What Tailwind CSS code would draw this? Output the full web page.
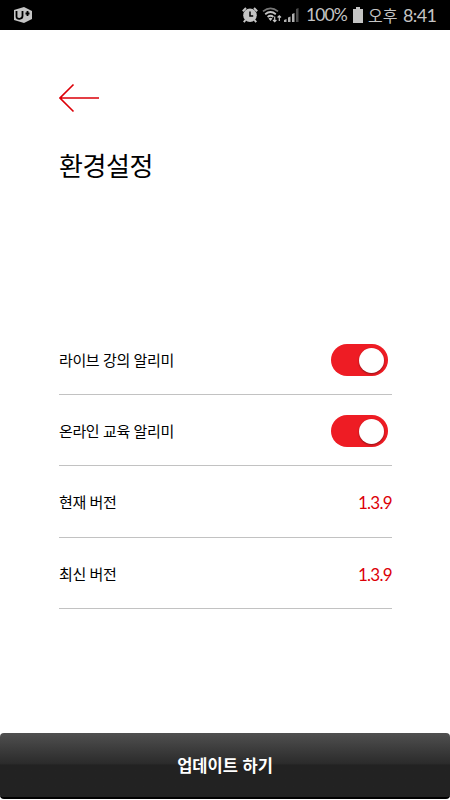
<!DOCTYPE html>
<html lang="ko">
<head>
  <meta charset="UTF-8" />
  <meta name="viewport" content="width=device-width, initial-scale=1.0" />
  <title>환경설정</title>
  <script src="https://cdn.jsdelivr.net/npm/@tailwindcss/browser@4"></script>
</head>
<body class="w-[450px] h-[800px] bg-white text-black overflow-hidden flex flex-col font-['Noto_Sans_CJK_KR',sans-serif]">

  <!-- Status bar -->
  <header class="h-[30px] shrink-0 bg-black text-[#c4c4c4] flex items-center justify-between pl-[14px] pr-[14px]">
    <svg class="w-[18px] h-[16px]" viewBox="0 0 18 16">
      <path d="M0 3 10 0l8 4v8l-8 4-10-3z" fill="#c4c4c4" />
      <path d="M2.5 4v5.500q0 2.500 3 2.300 3-.2 3-2.800V4M13.500 4v5M11.500 6.500h4" fill="none" stroke="#000" stroke-width="1.8" />
    </svg>
    <div class="flex items-center h-full">
      <!-- Alarm -->
      <svg class="w-[16px] h-[16px]" viewBox="0 0 16 16">
        <circle cx="8" cy="8.2" r="6.8" fill="#c4c4c4" />
        <path d="M.8 4.2 4 1M12 1l3.200 3.200M3.500 13l-1.700 2.200M12.500 13l1.700 2.200" stroke="#c4c4c4" stroke-width="2" />
        <path d="M8 4.500V9h3.200" fill="none" stroke="#000" stroke-width="1.5" />
      </svg>
      <!-- Wi-Fi -->
      <svg class="w-[20px] h-[16px] ml-[4px]" viewBox="0 0 20 16" fill="none">
        <path d="M1 4.400q7.500-6.200 15 0" stroke="#777" stroke-width="1.7" />
        <path d="M3.200 7.200q5.300-4.400 10.600 0M5.600 10q2.900-2.400 5.800 0" stroke="#c4c4c4" stroke-width="1.8" />
        <path d="m6.500 11.400 2 2.600 2-2.600q-2-1.300-4 0z" fill="#c4c4c4" />
        <path d="M12.700 9.500v5M11 13l1.700 1.700 1.700-1.700M17.300 14V9M15.600 10.500l1.700-1.700 1.700 1.700" stroke="#c4c4c4" stroke-width="1.2" />
      </svg>
      <!-- Signal -->
      <svg class="w-[15px] h-[16px] ml-[2px]" viewBox="0 0 15 16">
        <path d="M0 15v-2l2.500-1v3zM4 15v-4.500l2.500-1V15zM8 15V7l2.500-1v9z" fill="#b0b0b0" />
        <path d="M12 15V2l2.500-1v14z" fill="#4a4a4a" />
      </svg>
      <span class="w-[42px] ml-[7px] text-[17.500px] tracking-[-0.9px] whitespace-nowrap leading-[32px] font-['Lato',sans-serif]">100%</span>
      <!-- Battery -->
      <svg class="w-[10px] h-[16px] ml-[5px]" viewBox="0 0 10 16" fill="#c4c4c4">
        <path d="M3 0h4v2h3v14H0V2h3z" />
      </svg>
      <span class="w-[30px] ml-[5px] text-[16px] leading-[30px] whitespace-nowrap">오후</span>
      <span class="w-[33px] ml-[5px] text-[18px] tracking-[-0.6px] leading-[32px] whitespace-nowrap font-['Lato',sans-serif]">8:41</span>
    </div>
  </header>

  <main class="flex-1 px-[59px] pt-[53px]">
    <button class="block" aria-label="뒤로">
      <svg class="w-[40px] h-[30px]" viewBox="0 0 40 30" fill="none" stroke="#dc0008" stroke-width="1.6">
        <path d="M14.500 1.500 1 15l13.500 13.500M1 15h39" />
      </svg>
    </button>
    <h1 class="mt-[31px] h-[42px] text-[26px] leading-[42px] tracking-[-0.4px]">환경설정</h1>

    <!-- Settings list -->
    <ul class="mt-[138px] w-[333px] text-[15px] tracking-[-0.4px]">
      <li class="h-[71px] pt-[2px] border-b border-[#c2c2c2] flex items-center justify-between">
        <span>라이브 강의 알리미</span>
        <span class="w-[57px] h-[32px] mr-[4px] rounded-full bg-[#ee1c24] flex items-center justify-end pr-[4px]">
          <span class="w-[25px] h-[25px] rounded-full bg-white shadow-[0_1px_2px_rgba(0,0,0,0.4)]"></span>
        </span>
      </li>
      <li class="h-[71px] pt-[2px] border-b border-[#c2c2c2] flex items-center justify-between">
        <span>온라인 교육 알리미</span>
        <span class="w-[57px] h-[32px] mr-[4px] rounded-full bg-[#ee1c24] flex items-center justify-end pr-[4px]">
          <span class="w-[25px] h-[25px] rounded-full bg-white shadow-[0_1px_2px_rgba(0,0,0,0.4)]"></span>
        </span>
      </li>
      <li class="h-[72px] pt-[2px] border-b border-[#c2c2c2] flex items-center justify-between">
        <span>현재 버전</span>
        <span class="pt-px text-[17px] tracking-[-0.7px] text-[#dc0008] font-['Lato',sans-serif]">1.3.9</span>
      </li>
      <li class="h-[71px] pt-[2px] border-b border-[#c2c2c2] flex items-center justify-between">
        <span>최신 버전</span>
        <span class="pt-px text-[17px] tracking-[-0.7px] text-[#dc0008] font-['Lato',sans-serif]">1.3.9</span>
      </li>
    </ul>
  </main>

  <!-- Update button -->
  <button class="h-[66px] mb-px shrink-0 rounded-[4px] border-b-2 border-black bg-linear-to-b from-[#505050] from-0% via-[#2b2b2b] via-48% to-[#222] to-50% text-white text-[16.500px] font-bold">업데이트 하기</button>
</body>
</html>
